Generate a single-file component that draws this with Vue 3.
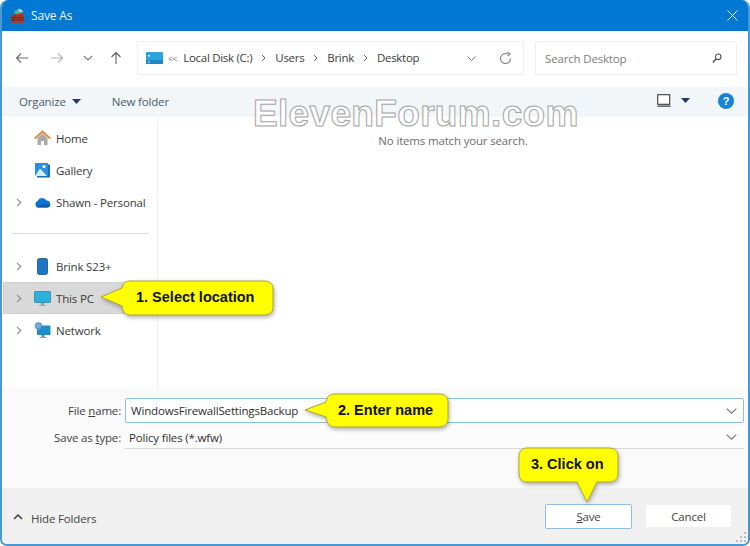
<script setup>
const groupA = [
  { name: 'Home', icon: 'home', chevron: false },
  { name: 'Gallery', icon: 'gallery', chevron: false },
  { name: 'Shawn - Personal', icon: 'cloud', chevron: true },
]
const groupB = [
  { name: 'Brink S23+', icon: 'phone', chevron: true, active: false },
  { name: 'This PC', icon: 'pc', chevron: true, active: true },
  { name: 'Network', icon: 'network', chevron: true, active: false },
]
</script>

<template>
  <div class="window">
    <header class="titlebar">
      <svg class="app-icon" width="17" height="17" viewBox="0 0 17 17">
        <path d="M5 6 C5 2 12 1 14 5 L10 8 Z" fill="#57b38c" />
        <path d="M9 2 C11 1 14 3 14 5 L10 5 Z" fill="#9bd0e8" />
        <path d="M2 8 L13 6 L15 8 L15 16 L2 16 Z" fill="#a3402c" />
        <path d="M2 10.5 H15 M2 13 H15 M6 8 V10.5 M11 8 V10.5 M4 10.5 V13 M9 10.5 V13 M13 10.5 V13" stroke="#5c251b" stroke-width=".8" fill="none" />
      </svg>
      <span class="title">Save As</span>
      <svg class="close" width="11" height="11" viewBox="0 0 11 11"><path d="M.5.5 10.5 10.5M10.5.5.5 10.5" stroke="#fff" stroke-width="1" /></svg>
    </header>

    <div class="navrow">
      <div class="navbtns">
        <svg width="14" height="12" viewBox="0 0 14 12"><path d="M13 6H1.5M6 1.5 1.5 6 6 10.5" fill="none" stroke="#6a6a6a" stroke-width="1.1" /></svg>
        <svg width="14" height="12" viewBox="0 0 14 12"><path d="M1 6h11.5M8 1.5 12.5 6 8 10.5" fill="none" stroke="#b4b4b4" stroke-width="1.1" /></svg>
        <svg width="10" height="6" viewBox="0 0 10 6"><path d="M1 1 5 5 9 1" fill="none" stroke="#7c7c7c" stroke-width="1.1" /></svg>
        <svg width="12" height="14" viewBox="0 0 12 14"><path d="M6 13V1.5M1.5 6 6 1.5 10.5 6" fill="none" stroke="#5c5c5c" stroke-width="1.1" /></svg>
      </div>
      <div class="address">
        <svg width="17" height="12" viewBox="0 0 17 12"><rect width="17" height="12" rx="1" fill="#2ba5dc" /><rect x="0" y="8" width="17" height="4" fill="#1c87c9" /><rect x="2" y="3" width="2" height="1.5" fill="#d7f2fb" /><rect x="2" y="9.5" width="2" height="1" fill="#d7f2fb" /></svg>
        <span class="crumb-more">&lt;&lt;</span>
        <span class="crumb">Local Disk (C:)</span>
        <svg class="sep" width="5" height="8" viewBox="0 0 5 8"><path d="M1 1 4 4 1 7" fill="none" stroke="#666" /></svg>
        <span class="crumb">Users</span>
        <svg class="sep" width="5" height="8" viewBox="0 0 5 8"><path d="M1 1 4 4 1 7" fill="none" stroke="#666" /></svg>
        <span class="crumb">Brink</span>
        <svg class="sep" width="5" height="8" viewBox="0 0 5 8"><path d="M1 1 4 4 1 7" fill="none" stroke="#666" /></svg>
        <span class="crumb">Desktop</span>
        <span class="grow"></span>
        <svg class="addr-chev" width="9" height="5" viewBox="0 0 9 5"><path d="M.5.5 4.5 4.5 8.5.5" fill="none" stroke="#777" /></svg>
        <svg class="refresh" width="13" height="13" viewBox="0 0 13 13"><path d="M11.5 6.5A5 5 0 1 1 8.6 2" fill="none" stroke="#7f7f7f" stroke-width="1.1" /><path d="M8 .4 11 1.8 8.6 4" fill="none" stroke="#7f7f7f" stroke-width="1.1" /></svg>
      </div>
      <div class="search">
        <span class="search-text">Search Desktop</span>
        <svg width="10" height="11" viewBox="0 0 10 11"><circle cx="6.2" cy="3.8" r="2.8" fill="none" stroke="#555" stroke-width="1.2" /><path d="M4 6 .8 9.6" stroke="#555" stroke-width="1.5" /></svg>
      </div>
    </div>

    <div class="toolbar">
      <span class="tool organize">Organize</span>
      <svg class="caret" width="9" height="5" viewBox="0 0 9 5"><path d="M0 0H9L4.5 5Z" fill="#2b3a55" /></svg>
      <span class="tool newfolder">New folder</span>
      <span class="grow"></span>
      <svg class="view" width="14" height="13" viewBox="0 0 14 13"><rect x=".7" y=".7" width="12" height="9.6" fill="#fff" stroke="#3a3a3a" stroke-width="1.1" /><path d="M.5 12.2h13" stroke="#3a3a3a" stroke-width="1.2" /></svg>
      <svg class="view-caret" width="9" height="5" viewBox="0 0 9 5"><path d="M0 0H9L4.5 5Z" fill="#1f3a63" /></svg>
      <span class="help">?</span>
    </div>

    <main class="body">
      <nav class="sidebar">
        <div class="group">
          <div v-for="item in groupA" :key="item.name" class="row">
            <svg v-if="item.chevron" class="chev" width="6" height="9" viewBox="0 0 6 9"><path d="M1 .8 4.8 4.5 1 8.2" fill="none" stroke="#8a8a8a" stroke-width="1.1" /></svg>
            <span v-else class="chev"></span>
            <svg class="nav-icon" width="17" height="17" viewBox="0 0 17 17">
              <template v-if="item.icon === 'home'">
                <path d="M3.5 8 8.5 3.5 13.5 8V15H10V11H7V15H3.5Z" fill="#a9a9a9" />
                <path d="M.8 8.6 8.5 1.5 16.2 8.6" fill="none" stroke="#e08a3c" stroke-width="2" />
              </template>
              <template v-else-if="item.icon === 'gallery'">
                <path d="M14 2.5h2v13H3V14h11Z" fill="#1b6fb8" />
                <rect x="1" y="1" width="13" height="13" fill="#2b8fe0" />
                <circle cx="10" cy="4.6" r="1.6" fill="#fff" />
                <path d="M1 14 6 6.5 13 14Z" fill="#d7ecfa" />
              </template>
              <template v-else>
                <path d="M4 13.5A3.4 3.4 0 0 1 3.6 7 5 5 0 0 1 12.5 6.6 3.5 3.5 0 0 1 13.5 13.5Z" fill="#0f74d1" />
                <path d="M3 13.5C5 10 11 9 16.5 10.8 16 12.6 15 13.5 13.5 13.5Z" fill="#0a5cb0" />
              </template>
            </svg>
            <span class="row-label">{{ item.name }}</span>
          </div>
        </div>
        <div class="divider"></div>
        <div class="group">
          <div v-for="item in groupB" :key="item.name" class="row" :class="{ active: item.active }">
            <svg class="chev" width="6" height="9" viewBox="0 0 6 9"><path d="M1 .8 4.8 4.5 1 8.2" fill="none" stroke="#8a8a8a" stroke-width="1.1" /></svg>
            <svg class="nav-icon" width="17" height="17" viewBox="0 0 17 17">
              <template v-if="item.icon === 'phone'">
                <rect x="3.5" y=".5" width="10" height="16" rx="1.8" fill="#1878c4" stroke="#2d4a66" stroke-width=".8" />
              </template>
              <template v-else-if="item.icon === 'pc'">
                <rect x=".5" y="1.5" width="16" height="11" rx=".8" fill="#2eb0dc" stroke="#1a7ea8" stroke-width=".7" />
                <path d="M7 13h3v2H7ZM5 15h7v.8H5Z" fill="#8aa2ad" />
              </template>
              <template v-else>
                <rect x="3" y="3.5" width="13.5" height="9.5" rx=".6" fill="#1c8fc6" />
                <path d="M7.5 13h3v2h-3ZM5.5 15h7v.8h-7Z" fill="#6f8a97" />
                <circle cx="4.5" cy="4" r="3.4" fill="#6fa9e0" stroke="#3d77b8" stroke-width=".6" />
              </template>
            </svg>
            <span class="row-label">{{ item.name }}</span>
          </div>
        </div>
      </nav>
      <section class="content">
        <p class="empty">No items match your search.</p>
      </section>
    </main>

    <section class="form">
      <div class="field">
        <label class="label">File <u>n</u>ame:</label>
        <div class="input focus">
          <span class="value">WindowsFirewallSettingsBackup</span>
          <svg width="11" height="6" viewBox="0 0 11 6"><path d="M.7.7 5.5 5.2 10.3.7" fill="none" stroke="#777" stroke-width="1.1" /></svg>
        </div>
      </div>
      <div class="field second">
        <label class="label">Save as <u>t</u>ype:</label>
        <div class="input plain">
          <span class="value">Policy files (*.wfw)</span>
          <svg width="11" height="6" viewBox="0 0 11 6"><path d="M.7.7 5.5 5.2 10.3.7" fill="none" stroke="#777" stroke-width="1.1" /></svg>
        </div>
      </div>
    </section>

    <footer class="footer">
      <svg class="hide-chev" width="10" height="6" viewBox="0 0 10 6"><path d="M1 5 5 1 9 5" fill="none" stroke="#333" stroke-width="1.4" /></svg>
      <span class="hide-text">Hide Folders</span>
      <span class="grow"></span>
      <button class="btn primary"><u>S</u>ave</button>
      <button class="btn">Cancel</button>
      <svg class="grip" width="12" height="12" viewBox="0 0 12 12"><path d="M9 1h2v2H9ZM5 5h2v2H5ZM9 5h2v2H9ZM1 9h2v2H1ZM5 9h2v2H5ZM9 9h2v2H9Z" fill="#bdbdbd" /></svg>
    </footer>

    <div class="watermark">ElevenForum.com</div>

    <div class="callout c1">
      <svg width="176" height="39" viewBox="0 0 176 39"><path class="bubble" d="M23 9C24 4 27 2 31 2H165C171 2 174 5 174 10V28C174 33 171 36 165 36H31C26 36 24 33 23 27L2 18Z" /></svg>
      <span class="callout-text">1. Select location</span>
    </div>
    <div class="callout c2">
      <svg width="148" height="37" viewBox="0 0 148 37"><path class="bubble" d="M23 10C24 4 27 2 32 2H136C142 2 145 5 145 10V26C145 31 142 35 136 35H32C27 35 24 32 23 25L2 18Z" /></svg>
      <span class="callout-text">2. Enter name</span>
    </div>
    <div class="callout c3">
      <svg width="104" height="58" viewBox="0 0 104 58"><path class="bubble" d="M10 2H92C98 2 101 5 101 11V27C101 33 98 36 92 36H80L70 56 60 36H10C5 36 2 33 2 27V11C2 5 5 2 10 2Z" /></svg>
      <span class="callout-text">3. Click on</span>
    </div>
  </div>
</template>

<style scoped>
.window {
  position: relative;
  width: 750px;
  height: 546px;
  box-sizing: border-box;
  display: flex;
  flex-direction: column;
  overflow: hidden;
  background: #fff;
  border: solid #4a98d2;
  border-width: 0 2px 2px 2px;
  border-radius: 8px 8px 7px 7px;
  font-family: "Open Sans", "Noto Sans", sans-serif;
  font-size: 11.5px;
  letter-spacing: -0.17px;
  color: #333;
}
.grow { flex: 1; }
.titlebar {
  height: 31px;
  flex: none;
  margin: 0 -2px;
  display: flex;
  align-items: center;
  padding: 0 0 0 9px;
  background: #0078d4;
  color: #fff;
}
.app-icon { margin-right: 5px; }
.title { font-size: 12px; flex: 1; color: #eaf4fc; }
.close { margin-right: 12px; }

.navrow {
  height: 56px;
  flex: none;
  display: flex;
  align-items: center;
  box-sizing: border-box;
  padding: 0 11px 2px 0;
}
.navbtns {
  width: 135px;
  flex: none;
  box-sizing: border-box;
  padding: 0 13px 0 13px;
  display: flex;
  align-items: center;
  gap: 19px;
}
.navbtns svg:nth-child(2) { margin-left: 2px; }
.navbtns svg:nth-child(4) { margin-left: -2px; }
.address {
  width: 387px;
  height: 34px;
  box-sizing: border-box;
  display: flex;
  align-items: center;
  padding: 0 11px 0 8px;
  border: 1px solid #eeeeee;
  border-radius: 2px;
  color: #3c3c3c;
}
.crumb { letter-spacing: -0.3px; padding-bottom: 2px; }
.crumb-more { margin: 0 7px 0 5px; font-size: 9px; color: #777; letter-spacing: -1px; }
.sep { margin: 0 9px; }
.addr-chev { margin-right: 23px; }
.search {
  width: 202px;
  height: 34px;
  box-sizing: border-box;
  margin-left: 11px;
  display: flex;
  align-items: center;
  justify-content: space-between;
  padding: 0 14px 0 9px;
  border: 1px solid #eeeeee;
  border-radius: 2px;
}
.search-text { color: #7d7d7d; }
.toolbar {
  height: 30px;
  flex: none;
  display: flex;
  align-items: center;
  box-sizing: border-box;
  padding: 0 14px 2px 17px;
  background: #f3f6f8;
  color: #4a5a6a;
}
.caret { margin-left: 6px; }
.newfolder { margin-left: 31px; }
.view { margin-right: 10px; margin-top: -2px; }
.view-caret { margin-right: 28px; margin-top: -1px; }
.help {
  width: 16px;
  height: 16px;
  border-radius: 50%;
  background: #1584d6;
  color: #fff;
  font-family: "Liberation Sans", sans-serif;
  font-size: 11px;
  font-weight: 700;
  line-height: 16px;
  text-align: center;
}
.body {
  flex: 1;
  min-height: 0;
  display: flex;
}
.sidebar {
  width: 156px;
  flex: none;
  box-sizing: border-box;
  padding-top: 5px;
  border-right: 1px solid #f0f0f0;
}
.row {
  height: 32px;
  display: flex;
  align-items: center;
  padding-left: 1px;
  box-sizing: border-box;
  color: #3a3a3a;
}
.row.active {
  background: #d9d9d9;
  border: 1px solid #cfcfcf;
  margin-left: 1px;
  padding-left: 0;
  margin-right: 2px;
}
.row.active .chev { margin-left: 12px; }
.chev { width: 6px; height: 9px; margin-left: 13px; flex: none; }
.nav-icon { margin-left: 12px; flex: none; }
.row-label { margin-left: 5px; white-space: nowrap; }
.divider {
  height: 1px;
  margin: 15px 8px 16px 9px;
  background: #dcdcdc;
}
.content {
  flex: 1;
  display: flex;
  justify-content: center;
}
.empty {
  margin: 16px 0 0 0;
  color: #6d6d6d;
  font-size: 11.5px;
}
.form {
  height: 100px;
  flex: none;
  box-sizing: border-box;
  padding: 10px 4px 0 0;
  background: #fafafa;
}
.field { display: flex; align-items: center; }
.second { margin-top: 3px; }
.label {
  width: 121px;
  flex: none;
  text-align: right;
  padding-right: 2px;
  box-sizing: border-box;
  color: #3f3f3f;
}
.input {
  flex: 1;
  box-sizing: border-box;
  display: flex;
  align-items: center;
  justify-content: space-between;
  margin-left: 2px;
  padding-right: 6px;
}
.focus {
  height: 25px;
  background: #fff;
  border: 1px solid #8fbfe0;
  border-radius: 2px;
  padding-left: 5px;
}
.plain {
  height: 23px;
  background: #fcfcfc;
  border-bottom: 1px solid #d9d9d9;
  padding-left: 4px;
  padding-right: 7px;
}
.value { color: #303030; }
.footer {
  height: 56px;
  flex: none;
  position: relative;
  display: flex;
  align-items: center;
  padding: 0 16px 0 11px;
  background: #f0f0f0;
}
.hide-text { margin-left: 8px; color: #444; margin-top: 4px; }
.hide-chev { margin-top: 2px; }
.btn {
  width: 87px;
  height: 24px;
  box-sizing: border-box;
  background: #fff;
  border: 1px solid #f0f0f0;
  border-radius: 2px;
  font: inherit;
  letter-spacing: inherit;
  color: #3f3f3f;
  padding: 0;
}
.primary {
  height: 25px;
  margin-right: 13px;
  border: 1px solid #8fbfe0;
}
.grip { position: absolute; right: 1px; bottom: 1px; }
.watermark {
  position: absolute;
  left: 251px;
  top: 92px;
  font-family: "Liberation Sans", sans-serif;
  font-size: 37px;
  font-weight: 700;
  line-height: 44px;
  letter-spacing: 0.33px;
  white-space: nowrap;
  color: rgba(255, 255, 255, 0.85);
  -webkit-text-stroke: 1px #a4a4a4;
}
.callout {
  position: absolute;
  display: flex;
  align-items: center;
  justify-content: center;
}
.callout svg { display: block; overflow: visible; filter: drop-shadow(1px 2px 2px rgba(0, 0, 0, 0.3)); }
.bubble { fill: #ffff00; stroke: #a9a53a; stroke-width: 1; }
.callout-text {
  position: absolute;
  font-family: "Liberation Sans", sans-serif;
  font-size: 14.5px;
  font-weight: 700;
  letter-spacing: 0;
  color: #111;
  white-space: nowrap;
}
.c1 { left: 97px; top: 279px; }
.c1 .callout-text { left: 37px; top: 10px; }
.c2 { left: 301px; top: 392px; }
.c2 .callout-text { left: 35px; top: 10px; }
.c3 { left: 515px; top: 446px; }
.c3 .callout-text { left: 14px; top: 10px; }
</style>

<style>
html, body { margin: 0; background: #fff; }
</style>
